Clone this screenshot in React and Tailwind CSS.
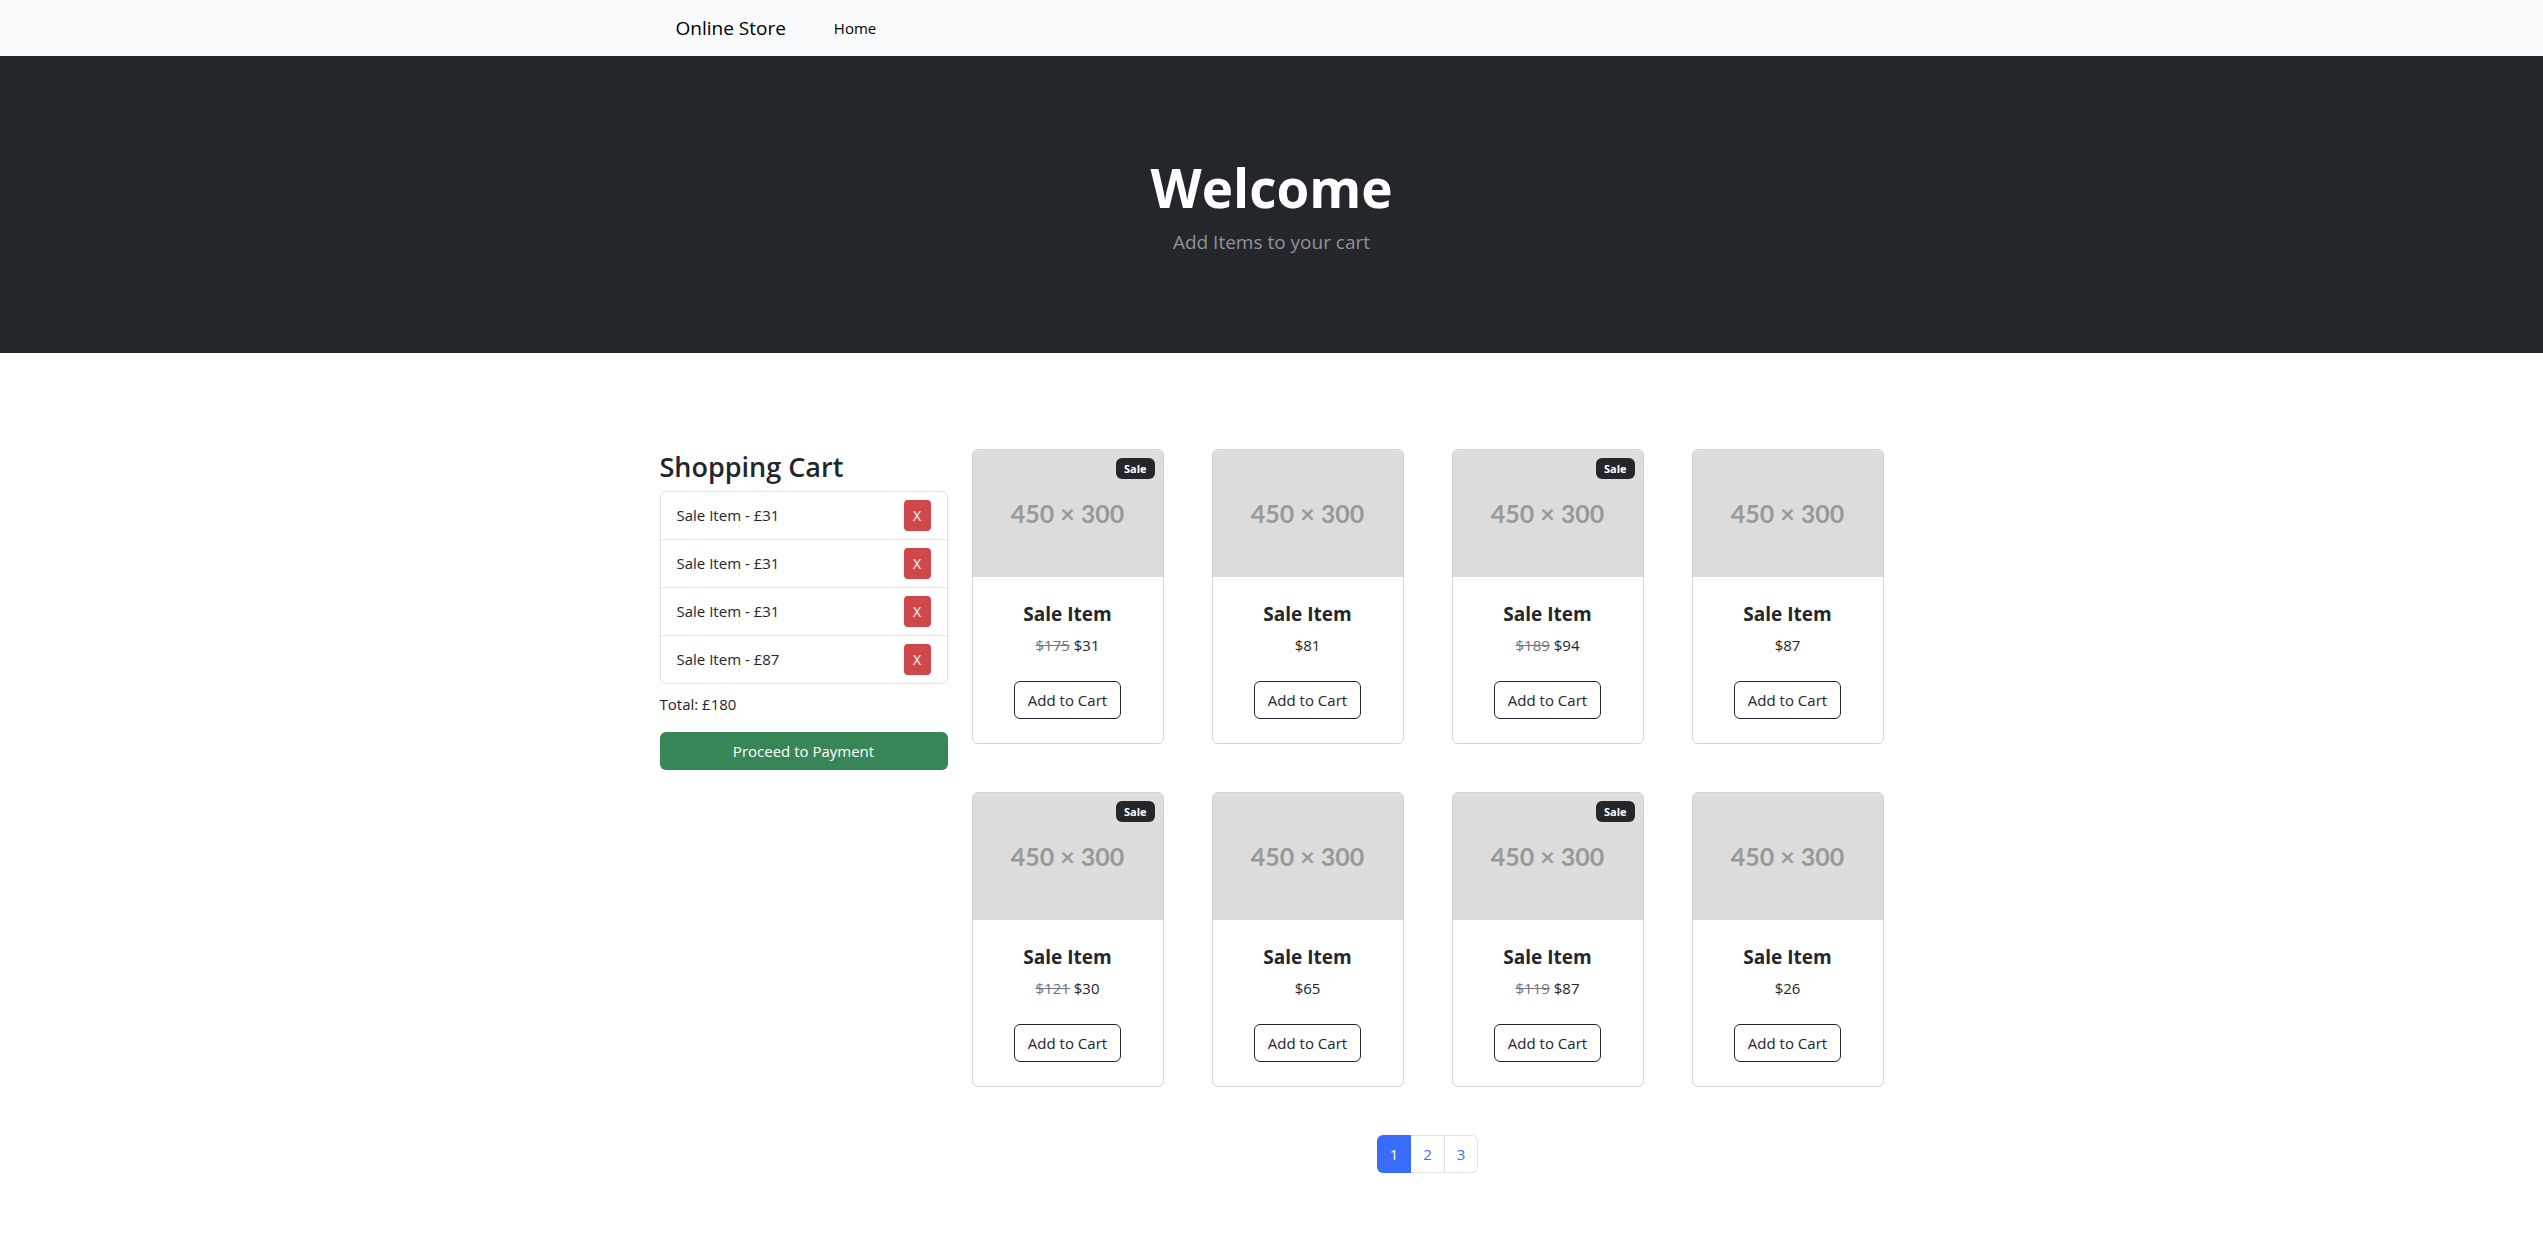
const cart = [
  { name: "Sale Item", price: 31 },
  { name: "Sale Item", price: 31 },
  { name: "Sale Item", price: 31 },
  { name: "Sale Item", price: 87 },
];

const products = [
  { price: 31, was: 175 },
  { price: 81 },
  { price: 94, was: 189 },
  { price: 87 },
  { price: 30, was: 121 },
  { price: 65 },
  { price: 87, was: 119 },
  { price: 26 },
];

function Navbar() {
  return (
    <nav className="bg-[#f8fafc] text-black">
      <div className="mx-auto flex h-14 max-w-[1320px] items-center px-16">
        <a href="#" className="mr-12 text-[19px] leading-[30px]">
          Online Store
        </a>
        <a href="#" className="leading-6">
          Home
        </a>
      </div>
    </nav>
  );
}

function Hero() {
  return (
    <header className="bg-[#23262b] py-24 text-center">
      <h1 className="mb-1 text-[53px] leading-[71px] font-bold text-white">Welcome</h1>
      <p className="text-[19px] leading-[30px] text-[#919295]">Add Items to your cart</p>
    </header>
  );
}

function Cart() {
  const total = cart.reduce((sum, item) => sum + item.price, 0);
  return (
    <aside className="w-72 shrink-0">
      <h2 className="mb-1.5 text-[27px] leading-9 font-semibold">Shopping Cart</h2>
      <ul className="divide-y divide-[#dee2e6] rounded-md border border-[#dee2e6]">
        {cart.map((item, i) => (
          <li key={i} className="flex items-center justify-between px-4 pt-2 pb-2">
            <span>
              {item.name} - £{item.price}
            </span>
            <button
              type="button"
              aria-label={"Remove " + item.name}
              className="h-[31px] w-[27px] rounded bg-[#cf484b] text-sm text-white"
            >
              X
            </button>
          </li>
        ))}
      </ul>
      <p className="mt-2 mb-4 leading-6">Total: £{total}</p>
      <button type="button" className="h-[38px] w-full rounded-md bg-[#388658] text-white">
        Proceed to Payment
      </button>
    </aside>
  );
}

function ProductCard({ price, was }) {
  return (
    <article className="relative flex flex-col overflow-hidden rounded-md border border-[#d2d3d4] text-center">
      {was && (
        <span className="absolute top-2 right-2 rounded-md bg-[#23262b] px-2 text-[11px] leading-[21px] font-bold text-white">
          Sale
        </span>
      )}
      <div className="flex aspect-[190/127] items-center justify-center bg-[#dddddd] font-['Lato',sans-serif] text-[25px] font-bold text-[#999999]">
        450 × 300
      </div>
      <div className="p-6">
        <h3 className="mb-1.5 text-[19px] leading-[26px] font-bold">Sale Item</h3>
        <p className="mb-6 leading-6">
          {was && <s className="text-[#6e757c]">${was}</s>} ${price}
        </p>
        <button type="button" className="h-[38px] rounded-md border border-[#23262b] px-[13px]">
          Add to Cart
        </button>
      </div>
    </article>
  );
}

function Pagination() {
  return (
    <nav aria-label="Pages" className="mt-12 flex justify-center text-[#396cfb]">
      <a
        href="#"
        aria-current="page"
        className="flex h-[38px] w-[34px] items-center justify-center rounded-l-md bg-[#396cfb] text-white"
      >
        1
      </a>
      <a
        href="#"
        className="flex h-[38px] w-[34px] items-center justify-center border-y border-r border-[#dee2e6]"
      >
        2
      </a>
      <a
        href="#"
        className="flex h-[38px] w-[33px] items-center justify-center rounded-r-md border-y border-r border-[#dee2e6]"
      >
        3
      </a>
    </nav>
  );
}

export default function App() {
  return (
    <div className="min-h-screen bg-white font-['Open_Sans',sans-serif] text-[15px] text-[#23262b]">
      <Navbar />
      <Hero />
      <div className="mx-auto flex max-w-[1320px] gap-6 px-12 py-24">
        <Cart />
        <main className="min-w-0 flex-1">
          <div className="grid grid-cols-4 gap-12">
            {products.map((product, i) => (
              <ProductCard key={i} {...product} />
            ))}
          </div>
          <Pagination />
        </main>
      </div>
    </div>
  );
}
